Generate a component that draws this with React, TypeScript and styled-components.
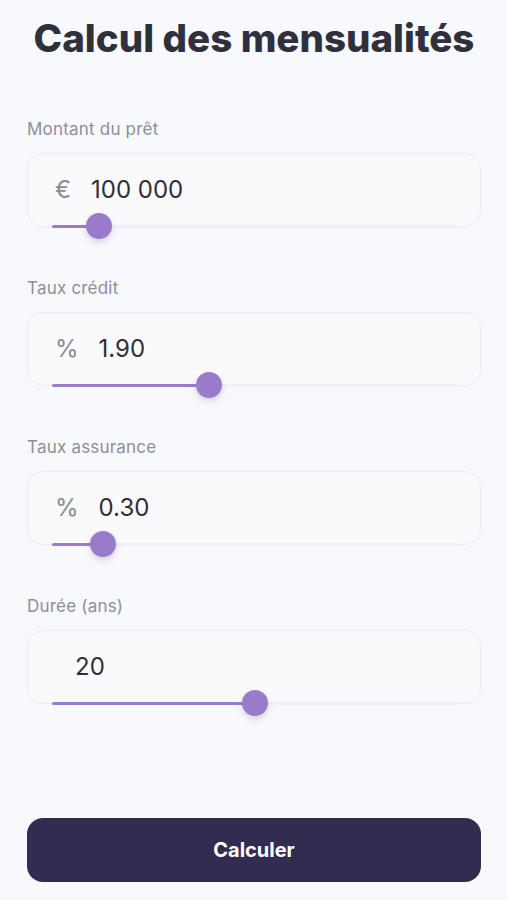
import React from 'react';
import styled, { createGlobalStyle } from 'styled-components';

const GlobalStyle = createGlobalStyle`
  html, body {
    margin: 0;
    padding: 0;
    background: #f8f9fc;
  }
  * {
    box-sizing: border-box;
  }
`;

const Page = styled.div`
  min-height: 100vh;
  display: flex;
  flex-direction: column;
  padding: 16px 26px 18px 27px;
  font-family: Inter, 'Noto Sans', sans-serif;
  background: #f8f9fc;
`;

const Title = styled.h1`
  margin: 0;
  font-size: 38.5px;
  line-height: 45px;
  font-weight: 800;
  color: #30303d;
  text-align: center;
`;

const Form = styled.div`
  display: flex;
  flex-direction: column;
  gap: 51px;
  margin-top: 58px;
`;

const Field = styled.div`
  display: flex;
  flex-direction: column;
  gap: 14px;
`;

const Label = styled.label`
  font-size: 17px;
  line-height: 20px;
  letter-spacing: 0.2px;
  color: #8e8e97;
`;

const Card = styled.div`
  height: 74px;
  display: flex;
  flex-direction: column;
  padding: 21px 24px 0 27px;
  border: 1px solid #ececf4;
  border-radius: 16px;
  background: #fafafd;
`;

const ValueRow = styled.div`
  display: flex;
  align-items: center;
  gap: 20px;
  height: 30px;
`;

const Symbol = styled.span`
  font-size: 24px;
  line-height: 30px;
  color: #8a8a91;
`;

const Value = styled.span`
  font-size: 24px;
  line-height: 30px;
  color: #2f2f37;
`;

const Slider = styled.div`
  position: relative;
  height: 26px;
  margin: 8px -1px -13px -3px;
`;

const Track = styled.div`
  position: absolute;
  left: 0;
  right: 0;
  top: 12px;
  height: 3px;
  border-radius: 2px;
  background: #f0effa;
`;

const Fill = styled.div`
  position: absolute;
  left: 0;
  top: 12px;
  height: 3px;
  border-radius: 2px;
  background: #9b7bcc;
`;

const Thumb = styled.div`
  position: absolute;
  top: 0;
  width: 26px;
  height: 26px;
  margin-left: -13px;
  border-radius: 50%;
  background: #9a7bcb;
  box-shadow: 0 3px 6px rgba(60, 40, 100, 0.18);
`;

const Button = styled.button`
  margin-top: auto;
  height: 64px;
  border: none;
  border-radius: 16px;
  background: #322d50;
  color: #ffffff;
  font-family: Inter, 'Noto Sans', sans-serif;
  font-size: 20px;
  font-weight: 700;
  cursor: pointer;
`;

type FieldData = {
  label: string;
  symbol: string;
  value: string;
  amount: number;
  min: number;
  max: number;
};

const fields: FieldData[] = [
  { label: 'Montant du prêt', symbol: '€', value: '100 000', amount: 100000, min: 10000, max: 1000000 },
  { label: 'Taux crédit', symbol: '%', value: '1.90', amount: 1.9, min: 0, max: 5 },
  { label: 'Taux assurance', symbol: '%', value: '0.30', amount: 0.3, min: 0, max: 3 },
  { label: 'Durée (ans)', symbol: '', value: '20', amount: 20, min: 5, max: 35 },
];

const RangeSlider: React.FC<{ ratio: number }> = ({ ratio }) => {
  // thumb centre travels from 13px to (width - 13px)
  const pos = `calc(13px + (100% - 26px) * ${ratio})`;
  return (
    <Slider>
      <Track />
      <Fill style={{ width: pos }} />
      <Thumb style={{ left: pos }} />
    </Slider>
  );
};

export default function App() {
  return (
    <Page>
      <GlobalStyle />
      <Title>Calcul des mensualités</Title>
      <Form>
        {fields.map((f) => (
          <Field key={f.label}>
            <Label>{f.label}</Label>
            <Card>
              <ValueRow>
                <Symbol>{f.symbol}</Symbol>
                <Value>{f.value}</Value>
              </ValueRow>
              <RangeSlider ratio={(f.amount - f.min) / (f.max - f.min)} />
            </Card>
          </Field>
        ))}
      </Form>
      <Button>Calculer</Button>
    </Page>
  );
}
